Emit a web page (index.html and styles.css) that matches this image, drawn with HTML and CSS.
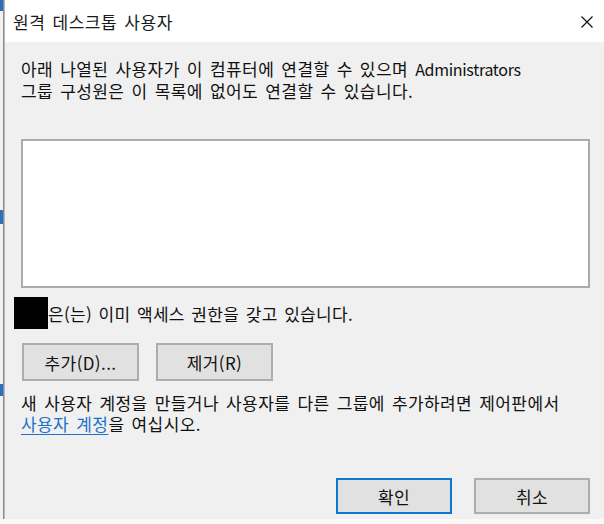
FILE: index.html
```html
<!DOCTYPE html>
<html lang="ko">
<head>
<meta charset="utf-8">
<title>원격 데스크톱 사용자</title>
<link rel="stylesheet" href="styles.css">
</head>
<body>
<div class="screen">
  <div class="backdrop">
    <span class="mark mark-top"></span>
    <span class="mark mark-mid"></span>
    <span class="mark mark-low"></span>
  </div>
  <div class="edge"></div>
  <div class="dialog">
    <div class="titlebar">
      <span class="title">원격 데스크톱 사용자</span>
      <span class="close" aria-label="닫기">
        <svg width="12" height="12" viewBox="0 0 12 12"><path d="M0.5 0.5 L11.5 11.5 M11.5 0.5 L0.5 11.5" stroke="#111" stroke-width="1.2" fill="none"/></svg>
      </span>
    </div>
    <div class="content">
      <p class="intro">아래 나열된 사용자가 이 컴퓨터에 연결할 수 있으며 <span class="latin">Administrators</span><br>그룹 구성원은 이 목록에 없어도 연결할 수 있습니다.</p>
      <div class="listbox"></div>
      <div class="access"><span class="redact"></span><span class="access-text">은(는) 이미 액세스 권한을 갖고 있습니다.</span></div>
      <div class="actions">
        <button class="btn btn-wide">추가(D)...</button>
        <button class="btn btn-wide">제거(R)</button>
      </div>
      <p class="note">새 사용자 계정을 만들거나 사용자를 다른 그룹에 추가하려면 제어판에서<br><a class="link" href="#">사용자 계정</a>을 여십시오.</p>
      <div class="footer">
        <button class="btn btn-primary">확인</button>
        <button class="btn">취소</button>
      </div>
    </div>
  </div>
</div>
<div class="bottom"></div>
</body>
</html>
```
FILE: styles.css
```css
* { box-sizing: border-box; }
html, body { margin: 0; padding: 0; }
body {
  width: 604px;
  height: 524px;
  overflow: hidden;
  background: #f7f7f7;
  font-family: "Noto Sans CJK KR", "Noto Sans", sans-serif;
  font-size: 17px;
  letter-spacing: 0.4px;
  color: #111;
}
.screen {
  display: flex;
  height: 519px;
}
.backdrop {
  width: 3px;
  background: #f2f2f2;
  display: flex;
  flex-direction: column;
}
.mark { display: block; width: 3px; background: #2a6fc0; }
.mark-top { height: 11px; }
.mark-mid { height: 14px; margin-top: 199px; }
.mark-low { height: 12px; margin-top: 160px; }
.edge {
  width: 2px;
  background: #8c8c8c;
  border-right: 1px solid #b9b9b9;
}
.dialog {
  flex: 1;
  display: flex;
  flex-direction: column;
  background: #f0f0f0;
}
.titlebar {
  height: 42px;
  background: #fff;
  display: flex;
  align-items: center;
  justify-content: space-between;
  padding: 0 11px 0 8px;
}
.title { font-size: 17px; letter-spacing: 0.5px; word-spacing: 2px; color: #1a1a1a; }
.close { display: flex; width: 12px; height: 12px; margin-top: 1px; }
.content {
  flex: 1;
  display: flex;
  flex-direction: column;
  padding: 0 14px 0 16px;
}
.intro, .note {
  margin: 0;
  line-height: 21px;
  word-spacing: 2px;
}
.latin { font-size: 16px; letter-spacing: -0.3px; }
.intro { margin-top: 16px; }
.listbox {
  margin-top: 38px;
  height: 149px;
  background: #fff;
  border: 2px solid #aaacaf;
}
.access {
  display: flex;
  align-items: center;
  margin-top: 9px;
  margin-left: -7px;
  height: 32px;
  word-spacing: 1.5px;
  letter-spacing: 0.3px;
}
.redact { width: 34px; height: 32px; background: #000; }
.actions {
  display: flex;
  gap: 17px;
  margin-top: 14px;
  margin-left: 1px;
}
.btn {
  font-family: inherit;
  font-size: 17px;
  letter-spacing: 0.4px;
  color: #111;
  background: #e1e1e1;
  border: 2px solid #adadad;
  width: 116px;
  height: 36px;
  padding: 0;
}
.btn-wide { width: 117px; height: 38px; }
.note { margin-top: 11px; }
.link { color: #1a73c8; text-decoration: underline; text-underline-offset: 3px; }
.footer {
  display: flex;
  justify-content: flex-end;
  gap: 22px;
  margin-top: 44px;
}
.btn-primary { border-color: #0a78d4; }
.bottom { height: 5px; background: #f9f9f9; }
```
